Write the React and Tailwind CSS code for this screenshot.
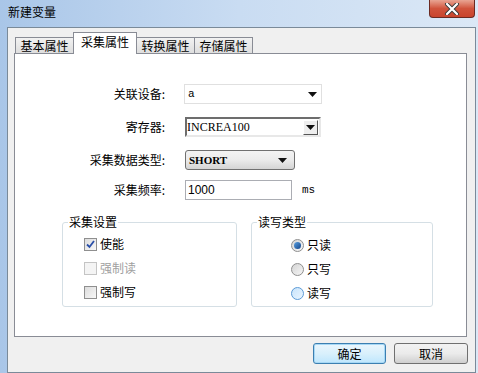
import React from "react";

const F = { fontFamily: '"Noto Sans CJK SC", "Noto Sans", sans-serif' };
const M = { fontFamily: '"Liberation Mono", "DejaVu Sans Mono", monospace' };

function Arrow() {
  return (
    <svg width="9" height="5" viewBox="0 0 9 5">
      <path d="M0 0 H9 L4.5 5 Z" fill="#111" />
    </svg>
  );
}

function Check({ checked, disabled, label }) {
  return (
    <div className="flex items-center h-[24px]">
      <div
        className={
          "w-[13px] h-[13px] border flex items-center justify-center " +
          (disabled
            ? "border-[#c4c4c4] bg-[#f4f4f4]"
            : "border-[#8f8f8f] bg-gradient-to-br from-[#dcdcdc] to-[#f8f8f8]")
        }
      >
        {checked && (
          <svg width="9" height="9" viewBox="0 0 9 9">
            <path d="M1 4.5 L3.5 7 L8 1" stroke="#2a4fa8" strokeWidth="1.8" fill="none" />
          </svg>
        )}
      </div>
      <span className={"ml-[3px] text-[12px] " + (disabled ? "text-[#a0a0a0]" : "text-black")}>{label}</span>
    </div>
  );
}

function Radio({ on, hover, label }) {
  return (
    <div className="flex items-center h-[24px]">
      <div
        className={
          "w-[13px] h-[13px] rounded-full border flex items-center justify-center " +
          (hover
            ? "border-[#5b9ad6] bg-gradient-to-br from-[#c8e4fb] to-[#eaf5ff]"
            : "border-[#8f8f8f] bg-gradient-to-br from-[#d4d4d4] to-[#f6f6f6]")
        }
      >
        {on && <div className="w-[7px] h-[7px] rounded-full bg-gradient-to-br from-[#5aa0e0] to-[#14448a]" />}
      </div>
      <span className="ml-[3px] text-[12px] text-black">{label}</span>
    </div>
  );
}

function Group({ title, className, children }) {
  return (
    <div className={"relative border border-[#d5dfe5] rounded-[3px] " + className}>
      <span className="absolute left-[5px] top-[-9px] bg-white px-[1px] text-[12px] leading-[16px] text-black">{title}</span>
      {children}
    </div>
  );
}

export default function App() {
  return (
    <div
      className="w-[478px] h-[373px] overflow-hidden bg-gradient-to-r from-[#a9c6e8] via-[#c9dcf2] to-[#dbe8f6] flex flex-col"
      style={F}
    >
      {/* title bar */}
      <div className="h-[27px] relative flex items-start">
        <span className="ml-[8px] mt-[4px] text-[12px] leading-[16px] text-black">新建变量</span>
        <div className="absolute left-[429px] top-0 w-[46px] h-[18px] rounded-b-[4px] border border-t-0 border-[#6b2a22] bg-gradient-to-b from-[#e8a493] via-[#d0533c] to-[#c9442d] flex items-center justify-center">
          <svg width="16" height="12" viewBox="0 0 16 12">
            <path d="M3 1 L13 11 M13 1 L3 11" stroke="#3a3a3a" strokeWidth="4" strokeLinecap="round" />
            <path d="M3 1 L13 11 M13 1 L3 11" stroke="#ffffff" strokeWidth="2.2" strokeLinecap="round" />
          </svg>
        </div>
      </div>
      {/* client */}
      <div className="ml-[7px] w-[469px] h-[346px] border border-[#7a8a99] bg-[#f0f0f0] flex flex-col">
        {/* tabs */}
        <div className="ml-[6px] mt-[4px] h-[21px] flex items-end relative z-10 text-[12px] text-black">
          <div className="ml-[1px] w-[59px] h-[16px] border border-b-0 border-[#898c95] bg-gradient-to-b from-[#f2f2f2] to-[#dedede] flex items-center justify-center leading-none">基本属性</div>
          <div className="w-[64px] -ml-[1px] border border-b-0 border-[#898c95] bg-white flex items-start pt-[3px] justify-center leading-none -mb-[1px] h-[22px]">采集属性</div>
          <div className="w-[59px] h-[16px] -ml-[1px] border border-b-0 border-[#898c95] bg-gradient-to-b from-[#f2f2f2] to-[#dedede] flex items-center justify-center leading-none">转换属性</div>
          <div className="w-[59px] h-[16px] -ml-[1px] border border-b-0 border-[#898c95] bg-gradient-to-b from-[#f2f2f2] to-[#dedede] flex items-center justify-center leading-none">存储属性</div>
        </div>
        {/* panel */}
        <div className="ml-[6px] w-[453px] h-[284px] border border-[#898c95] bg-white flex flex-col text-[12px] text-black">
          <div className="mt-[30px] flex flex-col">
            <div className="flex items-center h-[20px]">
              <span className="w-[152px] text-right pr-[2px]">关联设备:</span>
              <div className="ml-[17px] w-[138px] h-[20px] border border-[#e0e0e0] flex items-center justify-between pl-[3px] pr-[4px]">
                <span style={M} className="text-[11px]">a</span>
                <Arrow />
              </div>
            </div>
            <div className="flex items-center h-[20px] mt-[13px]">
              <span className="w-[152px] text-right pr-[2px]">寄存器:</span>
              <div className="ml-[18px] w-[136px] h-[20px] border-2 border-t-[#6d6d6d] border-l-[#6d6d6d] border-r-[#e8e8e8] border-b-[#e8e8e8] flex items-center justify-between">
                <span style={{ fontFamily: '"Liberation Serif", serif' }} className="text-[12px]">INCREA100</span>
                <div className="w-[15px] h-[15px] mr-[1px] border border-t-[#fff] border-l-[#fff] border-r-[#555] border-b-[#555] bg-[#eeeeee] flex items-center justify-center">
                  <Arrow />
                </div>
              </div>
            </div>
            <div className="flex items-center h-[20px] mt-[13px]">
              <span className="w-[152px] text-right pr-[2px]">采集数据类型:</span>
              <div className="ml-[18px] w-[110px] h-[20px] rounded-[3px] border border-[#707070] bg-gradient-to-b from-[#f3f3f3] via-[#ebebeb] to-[#d4d4d4] flex items-center justify-between pl-[3px] pr-[7px]">
                <span style={{ fontFamily: '"Liberation Serif", serif' }} className="text-[11px] font-bold">SHORT</span>
                <Arrow />
              </div>
            </div>
            <div className="flex items-center h-[20px] mt-[10px]">
              <span className="w-[152px] text-right pr-[2px]">采集频率:</span>
              <div className="ml-[18px] w-[107px] h-[20px] border border-[#abadb3] flex items-center pl-[2px]">
                <span style={{ fontFamily: '"Liberation Sans", sans-serif' }} className="text-[12px]">1000</span>
              </div>
              <span style={M} className="ml-[10px] text-[11px]">ms</span>
            </div>
          </div>
          <div className="mt-[22px] flex">
            <Group title="采集设置" className="ml-[47px] w-[175px] h-[85px]">
              <div className="pl-[21px] pt-[9px] flex flex-col">
                <Check checked label="使能" />
                <Check disabled label="强制读" />
                <Check label="强制写" />
              </div>
            </Group>
            <Group title="读写类型" className="ml-[14px] w-[182px] h-[85px]">
              <div className="pl-[39px] pt-[10px] flex flex-col">
                <Radio on label="只读" />
                <Radio label="只写" />
                <Radio hover label="读写" />
              </div>
            </Group>
          </div>
        </div>
        {/* buttons */}
        <div className="mt-[6px] flex text-[12px] text-black">
          <div className="ml-[305px] w-[73px] h-[21px] rounded-[3px] border border-[#3c7fb1] bg-gradient-to-b from-[#eaf6fd] via-[#d9f0fc] to-[#bee6fd] shadow-[inset_0_0_0_1px_#a7d8f5] flex items-center justify-center">确定</div>
          <div className="ml-[8px] w-[74px] h-[21px] rounded-[3px] border border-[#707070] bg-gradient-to-b from-[#f2f2f2] via-[#ebebeb] to-[#cfcfcf] flex items-center justify-center">取消</div>
        </div>
      </div>
    </div>
  );
}
